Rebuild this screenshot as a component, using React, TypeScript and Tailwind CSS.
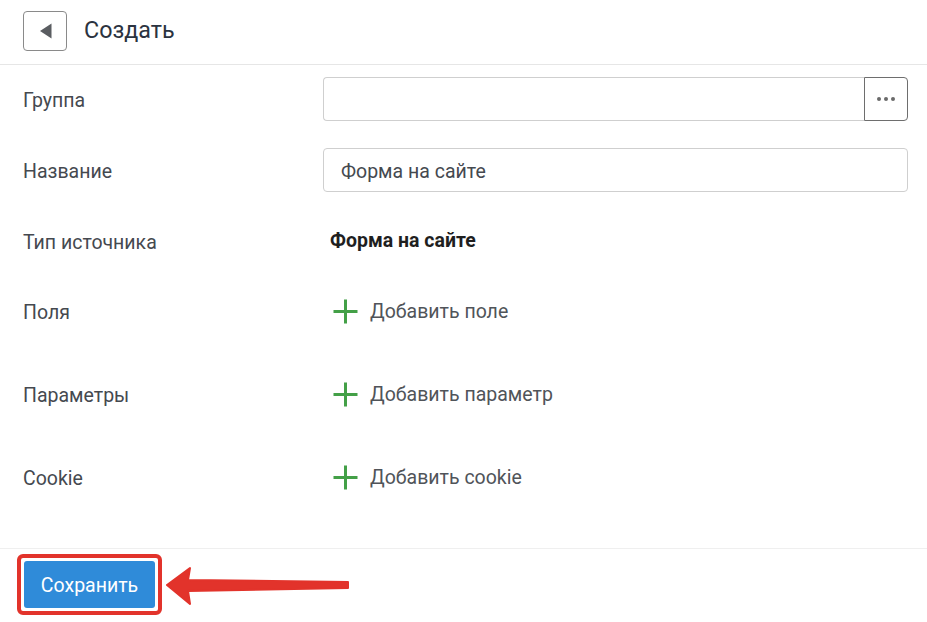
import React from 'react';

const font = { fontFamily: 'Roboto, "Noto Sans", sans-serif' };

function PlusIcon() {
  return (
    <svg width="25" height="25" viewBox="0 0 25 25" className="shrink-0">
      <path d="M12.5 0.5v24M0.5 12.5h24" stroke="#43a047" strokeWidth="3" fill="none" />
    </svg>
  );
}

function Row({ label, className, children }: { label: string; className: string; children: React.ReactNode }) {
  return (
    <div className={`flex items-center h-[44px] ${className}`}>
      <div className="w-[300px] shrink-0 pt-[3px] text-[19.5px] text-[#45494f]">{label}</div>
      <div className="flex-1 flex items-center min-w-0">{children}</div>
    </div>
  );
}

function AddLink({ text }: { text: string }) {
  return (
    <button className="flex items-center gap-[12px] pl-[10px] text-[19.5px] text-[#505459]">
      <PlusIcon />
      <span className="pt-[2px]">{text}</span>
    </button>
  );
}

export default function App() {
  return (
    <div className="w-[927px] h-[622px] bg-white relative overflow-hidden" style={font}>
      {/* Header */}
      <header className="h-[65px] flex items-center px-[23px] gap-[17px] border-b border-[#e6e6e6] pb-[3px]">
        <button className="w-[44px] h-[40px] border border-[#8a8a8a] rounded-[4px] flex items-center justify-center">
          <svg width="13" height="16" viewBox="0 0 13 16">
            <path d="M12.5 0.5v15L1 8z" fill="#5a5d61" />
          </svg>
        </button>
        <h1 className="text-[23.3px] text-[#2b3340]">Создать</h1>
      </header>

      {/* Form */}
      <div className="pl-[23px] pr-[19px] pb-[49px]">
        <Row label="Группа" className="mt-[12px]">
          <div className="flex-1 flex h-[44px]">
            <input className="flex-1 min-w-0 border border-[#cfcfcf] border-r-0 rounded-l-[4px] outline-none px-[16px]" />
            <button className="w-[44px] border border-[#6e6e6e] rounded-r-[4px] flex items-center justify-center gap-[3px]">
              <span className="w-[4px] h-[4px] rounded-full bg-[#6a6a6a]" />
              <span className="w-[4px] h-[4px] rounded-full bg-[#6a6a6a]" />
              <span className="w-[4px] h-[4px] rounded-full bg-[#6a6a6a]" />
            </button>
          </div>
        </Row>
        <Row label="Название" className="mt-[27px]">
          <input
            defaultValue="Форма на сайте"
            className="flex-1 min-w-0 h-[44px] border border-[#cfcfcf] rounded-[4px] outline-none px-[17px] pt-[2px] text-[19.5px] text-[#45494f]"
            style={font}
          />
        </Row>
        <Row label="Тип источника" className="mt-[27px]">
          <span className="pl-[7px] text-[19.5px] font-bold text-[#1f1f1f]">Форма на сайте</span>
        </Row>
        <Row label="Поля" className="mt-[26px]">
          <AddLink text="Добавить поле" />
        </Row>
        <Row label="Параметры" className="mt-[39px]">
          <AddLink text="Добавить параметр" />
        </Row>
        <Row label="Cookie" className="mt-[39px]">
          <AddLink text="Добавить cookie" />
        </Row>
      </div>

      {/* Footer */}
      <footer className="border-t border-[#efefef] pt-[5px] pl-[17px]">
        <div className="inline-block border-[4px] border-[#e2332b] rounded-[6px] p-[3px]">
          <button className="w-[131px] h-[47px] pt-[3px] bg-[#2f8bd9] rounded-[3px] text-white text-[19.5px]">Сохранить</button>
        </div>
      </footer>

      {/* Arrow pointing at the save button */}
      <svg className="absolute left-[164px] top-[564px]" width="190" height="44" viewBox="0 0 190 44">
        <path d="M3 21 L26 4 L24 16 L184 18 L184 24 L24 27 L26 40 Z" fill="#e2332b" stroke="#e2332b" strokeWidth="2" strokeLinejoin="round" />
      </svg>
    </div>
  );
}
